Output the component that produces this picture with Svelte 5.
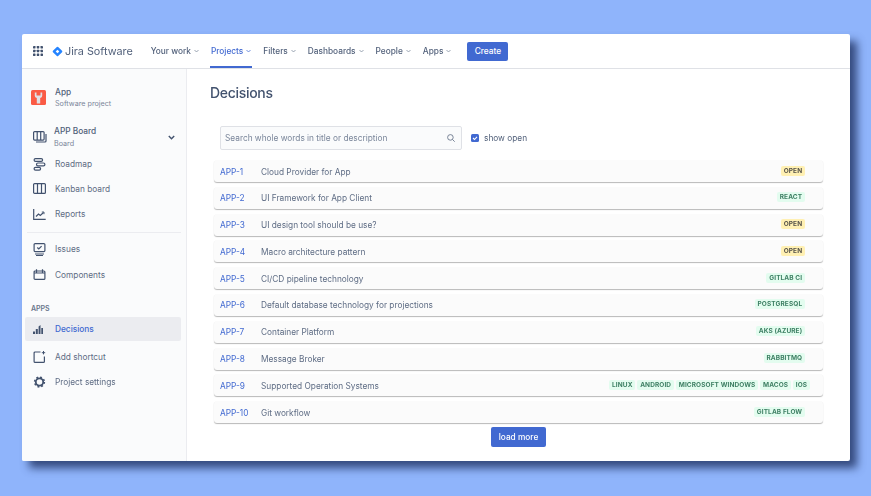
<script>
  const navItems = [
    { label: 'Your work' },
    { label: 'Projects', active: true },
    { label: 'Filters' },
    { label: 'Dashboards' },
    { label: 'People' },
    { label: 'Apps' }
  ];

  const decisions = [
    { key: 'APP-1', title: 'Cloud Provider for App', open: true, tags: ['OPEN'] },
    { key: 'APP-2', title: 'UI Framework for App Client', tags: ['REACT'] },
    { key: 'APP-3', title: 'UI design tool should be use?', open: true, tags: ['OPEN'] },
    { key: 'APP-4', title: 'Macro architecture pattern', open: true, tags: ['OPEN'] },
    { key: 'APP-5', title: 'CI/CD pipeline technology', tags: ['GITLAB CI'] },
    { key: 'APP-6', title: 'Default database technology for projections', tags: ['POSTGRESQL'] },
    { key: 'APP-7', title: 'Container Platform', tags: ['AKS (AZURE)'] },
    { key: 'APP-8', title: 'Message Broker', tags: ['RABBITMQ'] },
    { key: 'APP-9', title: 'Supported Operation Systems', tags: ['LINUX', 'ANDROID', 'MICROSOFT WINDOWS', 'MACOS', 'IOS'] },
    { key: 'APP-10', title: 'Git workflow', tags: ['GITLAB FLOW'] }
  ];
</script>

<div class="page">
  <div class="window">
    <header class="topbar">
      <svg class="grid-icon" width="10" height="10" viewBox="0 0 12 12">
        {#each [0, 4.5, 9] as y}
          {#each [0, 4.5, 9] as x}
            <rect {x} {y} width="3" height="3" rx="0.5" fill="#42526e" />
          {/each}
        {/each}
      </svg>
      <svg class="logo" width="11" height="11" viewBox="0 0 12 12">
        <rect x="2" y="2" width="8" height="8" rx="1" transform="rotate(45 6 6)" fill="#2684ff" />
        <rect x="4.600" y="4.600" width="2.800" height="2.800" transform="rotate(45 6 6)" fill="#fff" />
      </svg>
      <span class="brand">Jira Software</span>
      <nav class="nav">
        {#each navItems as item}
          <span class="nav-item" class:active={item.active}>
            {item.label}
            <svg width="5" height="4" viewBox="0 0 6 4"><path d="M.6.8 3 3.200 5.400.8" fill="none" stroke="currentColor" stroke-width=".9" /></svg>
          </span>
        {/each}
      </nav>
      <button class="btn create">Create</button>
    </header>

    <div class="body">
      <aside class="sidebar">
        <div class="project">
          <svg width="15" height="15" viewBox="0 0 15 15">
            <rect width="15" height="15" rx="1.500" fill="#fa5b45" />
            <path d="M3.800 2.500h1.700v3h4v-3h1.700v3.600q0 1.400-2 1.900v5.500H5.800V8q-2-.5-2-1.900z" fill="#dfe1e6" />
          </svg>
          <div class="two-line">
            <strong>App</strong>
            <small>Software project</small>
          </div>
        </div>

        <div class="board">
          <svg width="14" height="12" viewBox="0 0 14 12" fill="none" stroke="#42526e" stroke-width="1.200">
            <rect x=".6" y=".6" width="10.500" height="8.500" rx="1" />
            <path d="M4.200.6v8.500M7.700.6v8.500M13 3v7a1 1 0 0 1-1 1H3" />
          </svg>
          <div class="two-line">
            <strong>APP Board</strong>
            <small>Board</small>
          </div>
          <svg class="board-chev" width="7" height="5" viewBox="0 0 7 5"><path d="M.8 1 3.500 3.800 6.200 1" fill="none" stroke="#42526e" stroke-width="1.400" /></svg>
        </div>

        <div class="link roadmap">
          <svg width="12" height="13" viewBox="0 0 12 13" fill="none" stroke="#42526e" stroke-width="1.200">
            <rect x=".6" y=".6" width="8.500" height="2.800" rx="1.400" />
            <rect x="3" y="5" width="8.400" height="2.800" rx="1.400" />
            <rect x=".6" y="9.400" width="6.500" height="2.800" rx="1.400" />
          </svg>
          <span>Roadmap</span>
        </div>
        <div class="link">
          <svg width="13" height="11" viewBox="0 0 13 11" fill="none" stroke="#42526e" stroke-width="1.200">
            <rect x=".6" y=".6" width="11.800" height="9.800" rx="1" />
            <path d="M4.500.6v9.800M8.500.6v9.800" />
          </svg>
          <span>Kanban board</span>
        </div>
        <div class="link">
          <svg width="13" height="11" viewBox="0 0 13 11" fill="none" stroke="#42526e" stroke-width="1.200">
            <path d="M.7 0v10.300h12" />
            <path d="M3 7.500 5.500 5l1.800 1.500L10.500 3.500" />
            <path d="M8.800 3h2.200v2.200" stroke-width=".9" />
          </svg>
          <span>Reports</span>
        </div>

        <hr />

        <div class="link">
          <svg width="12" height="13" viewBox="0 0 12 13" fill="none" stroke="#42526e" stroke-width="1.200">
            <rect x=".6" y=".6" width="10.800" height="8" rx="1" />
            <path d="m3.800 4.500 1.500 1.500 2.800-2.800M1.500 11h9M2.500 12.500h7" />
          </svg>
          <span>Issues</span>
        </div>
        <div class="link">
          <svg width="12" height="11" viewBox="0 0 12 11" fill="none" stroke="#42526e" stroke-width="1.200">
            <rect x=".6" y="2" width="10.800" height="8.400" rx="1" />
            <path d="M3 .2v3.800M9 .2v3.800M.6 4h10.800" />
          </svg>
          <span>Components</span>
        </div>

        <div class="section">APPS</div>

        <div class="link selected">
          <svg width="10" height="9" viewBox="0 0 10 9" fill="#42526e">
            <path d="M0 9V6.500h2V9zM2.800 9V4h2v5zM5.600 9V1.500L7.500 0v9zM8.300 9V3H10v6z" />
          </svg>
          <span>Decisions</span>
        </div>
        <div class="link">
          <svg width="12" height="12" viewBox="0 0 12 12" fill="none" stroke="#42526e" stroke-width="1.200">
            <path d="M7 1H1.600a1 1 0 0 0-1 1v8.400a1 1 0 0 0 1 1h8.300a1 1 0 0 0 1-1V5.500" />
            <path d="M10 0v3.400M8.300 1.700h3.400" stroke-width="1" />
          </svg>
          <span>Add shortcut</span>
        </div>
        <div class="link">
          <svg width="12" height="12" viewBox="0 0 12 12" fill="none" stroke="#42526e">
            <circle cx="6" cy="6" r="3.700" stroke-width="1.800" />
            <circle cx="6" cy="6" r="4.900" stroke-width="1.500" stroke-dasharray="1.900 1.950" />
          </svg>
          <span>Project settings</span>
        </div>
      </aside>

      <main class="content">
        <h1>Decisions</h1>
        <div class="filters">
          <div class="search">
            <span>Search whole words in title or description</span>
            <svg width="8" height="8" viewBox="0 0 8 8" fill="none" stroke="#6b778c" stroke-width=".9">
              <circle cx="3.400" cy="3.400" r="2.800" />
              <path d="m5.500 5.500 2.200 2.200" />
            </svg>
          </div>
          <span class="check">
            <svg width="8" height="8" viewBox="0 0 8 8"><rect width="8" height="8" rx="1.500" fill="#4169d1" /><path d="m2 4 1.500 1.500L6 2.800" fill="none" stroke="#fff" stroke-width="1.100" /></svg>
          </span>
          <span class="show-open">show open</span>
        </div>

        <ul class="list">
          {#each decisions as d}
            <li class="row">
              <span class="key">{d.key}</span>
              <span class="title">{d.title}</span>
              <span class="tags" class:multi={d.tags.length > 1}>
                {#each d.tags as tag}
                  <span class="tag" class:open={d.open}>{tag}</span>
                {/each}
              </span>
            </li>
          {/each}
        </ul>

        <div class="more">
          <button class="btn">load more</button>
        </div>
      </main>
    </div>
  </div>
</div>

<style>
  :global(body) {
    margin: 0;
    background: #8fb4fb;
    font-family: Inter, "Liberation Sans", sans-serif;
  }

  .page {
    width: 871px;
    height: 496px;
    padding: 34px 21px 35px 22px;
    box-sizing: border-box;
    overflow: hidden;
  }

  .window {
    height: 427px;
    background: #fff;
    border-radius: 2px;
    display: flex;
    flex-direction: column;
    box-shadow: 7px 7px 8px rgba(30, 48, 95, 0.8);
    filter: blur(0.45px);
  }

  .topbar {
    height: 35px;
    flex: none;
    box-sizing: border-box;
    display: flex;
    align-items: center;
    padding-left: 11px;
    border-bottom: 1px solid #dfe1e6;
    font-size: 8.300px;
  }

  .logo {
    margin-left: 9px;
  }

  .brand {
    margin-left: 2px;
    font-size: 10.800px;
    color: #505f79;
  }

  .nav {
    display: flex;
    margin-left: 17px;
    height: 34px;
    gap: 10px;
  }

  .nav-item {
    display: flex;
    align-items: center;
    gap: 3px;
    padding: 0 1px;
    color: #505f79;
    white-space: nowrap;
    font-weight: 500;
  }

  .nav-item svg {
    color: #7a869a;
  }

  .nav-item.active {
    color: #4169d1;
    box-shadow: inset 0 -2px 0 #4169d1;
  }

  .nav-item.active svg {
    color: #4169d1;
  }

  .btn {
    background: #4169d1;
    border: 0;
    border-radius: 2px;
    color: #fff;
    font: 500 8.300px Inter, "Liberation Sans", sans-serif;
    height: 19px;
    padding: 0 9px;
  }

  .create {
    margin-left: 15px;
    width: 41px;
    padding: 0;
  }

  .body {
    flex: 1;
    display: flex;
    min-height: 0;
  }

  .sidebar {
    width: 165px;
    flex: none;
    box-sizing: border-box;
    background: #fafbfc;
    border-right: 1px solid #ebecf0;
    padding: 0 5px 0 3px;
    border-bottom-left-radius: 2px;
  }

  .project {
    display: flex;
    align-items: center;
    gap: 9px;
    padding: 18px 0 0 6px;
    height: 21px;
  }

  .two-line {
    display: flex;
    flex-direction: column;
    gap: 2.500px;
  }

  .two-line strong {
    font-size: 8.300px;
    font-weight: 500;
    color: #505f79;
  }

  .two-line small {
    font-size: 7.200px;
    color: #7a869a;
  }

  .board {
    display: flex;
    align-items: center;
    gap: 7px;
    margin-top: 18px;
    padding-left: 8px;
    height: 22px;
  }

  .board-chev {
    margin-left: auto;
    margin-right: 6px;
  }

  .link {
    display: flex;
    align-items: center;
    height: 25.500px;
    padding-left: 8px;
    color: #5e6c84;
    font-size: 8.300px;
  }

  .link svg {
    width: 13px;
    flex: none;
  }

  .link span {
    margin-left: 9px;
  }

  .roadmap {
    margin-top: 4px;
    height: 24px;
  }

  .sidebar hr {
    border: 0;
    border-top: 1px solid #ebecf0;
    margin: 5px 0 3.500px 2px;
  }

  .section {
    margin: 16px 0 4.500px 6px;
    font-size: 7px;
    font-weight: 600;
    color: #6b778c;
    line-height: 9px;
  }

  .selected {
    height: 24px;
    background: #ebecf0;
    border-radius: 2px;
    margin-bottom: 3px;
  }

  .selected svg {
    width: 10px;
    margin-right: 3px;
  }

  .selected span {
    color: #4169d1;
    font-weight: 500;
  }

  .content {
    flex: 1;
    min-width: 0;
    box-sizing: border-box;
    padding: 15px 27px 0 23px;
  }

  h1 {
    margin: 0;
    font-size: 14px;
    font-weight: 500;
    color: #42526e;
    line-height: 18px;
    letter-spacing: -0.3px;
  }

  .filters {
    display: flex;
    align-items: center;
    margin: 24px 0 10px 10px;
  }

  .search {
    width: 242px;
    height: 24px;
    box-sizing: border-box;
    background: #fafbfc;
    border: 1px solid #dfe1e6;
    border-radius: 2px;
    padding: 0 6px 0 4px;
    display: flex;
    align-items: center;
    justify-content: space-between;
    font-size: 8.300px;
    color: #7a869a;
  }

  .check {
    display: flex;
    margin-left: 9px;
  }

  .show-open {
    margin-left: 5px;
    font-size: 8.300px;
    color: #505f79;
  }

  .list {
    list-style: none;
    margin: 0 0 0 4px;
    padding: 0;
    display: flex;
    flex-direction: column;
    gap: 4.800px;
  }

  .row {
    height: 22px;
    box-sizing: border-box;
    padding: 1px 18px 0 6px;
    background: #fbfbfb;
    border-radius: 3px;
    box-shadow: 0 1px 1px rgba(0, 0, 0, 0.28);
    display: flex;
    align-items: center;
    font-size: 8.300px;
  }

  .key {
    width: 41px;
    flex: none;
    color: #4169d1;
  }

  .title {
    color: #5e6c84;
    white-space: nowrap;
  }

  .tags {
    margin-left: auto;
    display: flex;
    gap: 2px;
    margin-top: -2px;
  }

  .tags.multi {
    margin-right: -5px;
  }

  .tag {
    background: #e3fcef;
    color: #3d7f63;
    font-size: 6.500px;
    font-weight: 700;
    padding: 0 2.800px;
    line-height: 10px;
    border-radius: 2px;
    white-space: nowrap;
    letter-spacing: 0.1px;
  }

  .tag.open {
    background: #fff0b3;
    color: #55524a;
  }

  .more {
    display: flex;
    justify-content: center;
    margin: 4px 0 0 4px;
  }

  .more .btn {
    width: 55px;
    height: 20px;
    padding: 0;
  }
</style>
